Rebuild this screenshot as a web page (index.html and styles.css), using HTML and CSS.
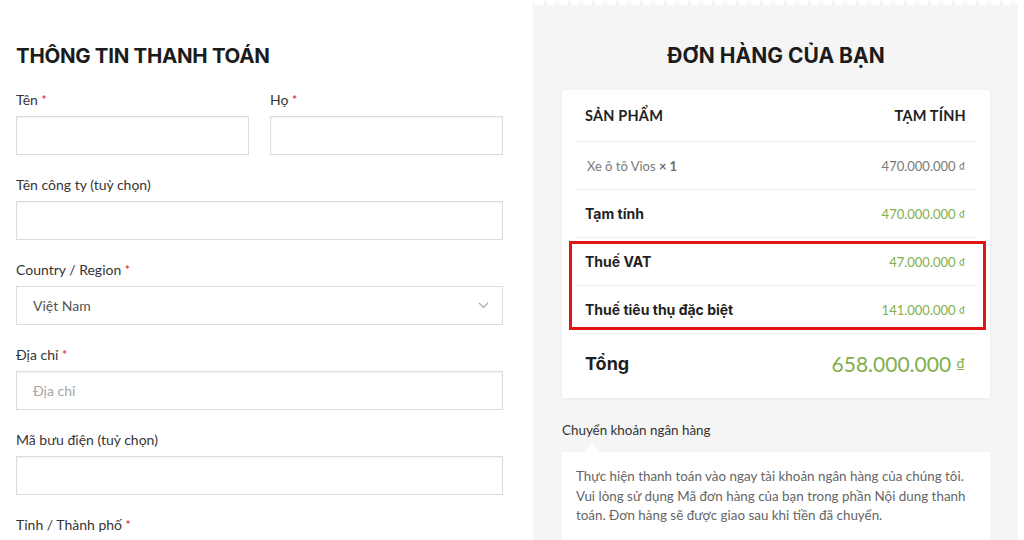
FILE: index.html
```html
<!DOCTYPE html>
<html lang="vi">
<head>
<meta charset="utf-8">
<title>Thanh toán</title>
<link rel="stylesheet" href="styles.css">
</head>
<body>
<div class="page">
  <section class="billing">
    <h2 class="title">THÔNG TIN THANH TOÁN</h2>
    <div class="row-2">
      <div class="field">
        <label class="label">Tên <span class="req">*</span></label>
        <div class="input"></div>
      </div>
      <div class="field">
        <label class="label">Họ <span class="req">*</span></label>
        <div class="input"></div>
      </div>
    </div>
    <div class="field">
      <label class="label">Tên công ty (tuỳ chọn)</label>
      <div class="input"></div>
    </div>
    <div class="field">
      <label class="label">Country / Region <span class="req">*</span></label>
      <div class="input select">
        <span class="value">Việt Nam</span>
        <svg class="chev" width="11" height="7" viewBox="0 0 11 7"><path d="M1 1l4.5 4.5L10 1" fill="none" stroke="#a9a9a9" stroke-width="1.2"/></svg>
      </div>
    </div>
    <div class="field">
      <label class="label">Địa chỉ <span class="req">*</span></label>
      <div class="input"><span class="ph">Địa chỉ</span></div>
    </div>
    <div class="field">
      <label class="label">Mã bưu điện (tuỳ chọn)</label>
      <div class="input"></div>
    </div>
    <div class="field">
      <label class="label">Tỉnh / Thành phố <span class="req">*</span></label>
    </div>
  </section>

  <aside class="order">
    <h2 class="title center">ĐƠN HÀNG CỦA BẠN</h2>
    <div class="card">
      <div class="trow head">
        <span>SẢN PHẨM</span><span>TẠM TÍNH</span>
      </div>
      <div class="trow item">
        <span>Xe ô tô Vios <b class="qty">× 1</b></span><span>470.000.000 <span class="cur">₫</span></span>
      </div>
      <div class="trow sum">
        <span class="lbl">Tạm tính</span><span class="amt">470.000.000 <span class="cur">₫</span></span>
      </div>
      <div class="trow sum">
        <span class="lbl">Thuế VAT</span><span class="amt">47.000.000 <span class="cur">₫</span></span>
      </div>
      <div class="trow sum">
        <span class="lbl">Thuế tiêu thụ đặc biệt</span><span class="amt">141.000.000 <span class="cur">₫</span></span>
      </div>
      <div class="trow total">
        <span class="lbl">Tổng</span><span class="amt">658.000.000 <span class="cur">₫</span></span>
      </div>
      <div class="highlight"></div>
    </div>
    <div class="pay-label">Chuyển khoản ngân hàng</div>
    <div class="pay-box">
      Thực hiện thanh toán vào ngay tài khoản ngân hàng của chúng tôi. Vui lòng sử dụng Mã đơn hàng của bạn trong phần Nội dung thanh toán. Đơn hàng sẽ được giao sau khi tiền đã chuyển.
    </div>
  </aside>
</div>
</body>
</html>
```

FILE: styles.css
```css
* { box-sizing: border-box; }
html, body { margin: 0; padding: 0; background: #fff; }
body {
  font-family: Lato, "Noto Sans", sans-serif;
  color: #333;
  width: 1024px;
  height: 540px;
  overflow: hidden;
}
.page {
  display: flex;
  align-items: flex-start;
}
.title {
  margin: 0;
  font-family: Inter, "Noto Sans", sans-serif;
  font-weight: 700;
  font-size: 21px;
  line-height: 30px;
  color: #1c1c1c;
}
.title.center { text-align: center; }

.billing {
  width: 503px;
  padding: 41px 0 0 16px;
}
.billing .title { margin-bottom: 19px; font-size: 20.5px; letter-spacing: -0.3px; }
.row-2 {
  display: grid;
  grid-template-columns: 1fr 1fr;
  column-gap: 21px;
}
.field { margin-bottom: 20px; }
.label {
  display: block;
  font-size: 14px;
  line-height: 20px;
  color: #353535;
  margin-bottom: 6px;
}
.req { color: #e0394a; font-weight: 700; font-size: 12px; vertical-align: 1px; }
.input {
  height: 39px;
  border: 1px solid #dcdcdc;
  box-shadow: inset 0 1px 2px rgba(0,0,0,0.06);
  background: #fff;
  display: flex;
  align-items: center;
  padding: 0 16px;
  font-size: 14px;
}
.select { justify-content: space-between; box-shadow: none; }
.select .value { color: #555; }
.select .chev { margin-right: -3px; }
.ph { color: #a6a6a6; }

.order {
  position: relative;
  margin-left: 30px;
  width: 485px;
  height: 540px;
  background: #f5f5f5;
  padding: 41px 28px 0 29px;
}
.order::before {
  content: "";
  position: absolute;
  left: 0; right: 0; top: 0;
  height: 10px;
  background: radial-gradient(circle at 50% 0, #fff 5px, rgba(255,255,255,0) 6px) repeat-x;
  background-size: 12px 10px;
}
.order .title { margin-bottom: 19px; }

.card {
  position: relative;
  background: #fff;
  padding: 0 13px 6px;
  box-shadow: 0 1px 3px rgba(0,0,0,0.06);
}
.trow {
  display: flex;
  justify-content: space-between;
  align-items: center;
  height: 48px;
  padding: 0 12px 0 10px;
  border-bottom: 1px solid #ececec;
  font-size: 13px;
}
.trow.head {
  height: 52px;
  font-weight: 700;
  font-size: 14.5px;
  color: #222;
  letter-spacing: 0.2px;
  padding-right: 11px;
}
.trow.item { color: #7a7a7a; padding-left: 12px; }
.qty { font-weight: 700; color: #6d6d6d; }
.cur { font-size: 10px; text-decoration: underline; vertical-align: 2px; }
.sum .lbl {
  font-family: Inter, "Noto Sans", sans-serif;
  font-weight: 700;
  font-size: 14px;
  color: #1f1f1f;
}
.amt { color: #80b04c; }
.trow.total {
  height: 58px;
  border-bottom: none;
}
.total .lbl {
  font-family: Inter, "Noto Sans", sans-serif;
  font-weight: 700;
  font-size: 18px;
  color: #1f1f1f;
}
.total .amt { font-size: 21px; }
.total .cur { font-size: 14px; vertical-align: 4px; }

.highlight {
  position: absolute;
  left: 7px;
  right: 4px;
  top: 151px;
  height: 89px;
  border: 3px solid #e01414;
  pointer-events: none;
}

.pay-label {
  margin-top: 22px;
  font-size: 13.4px;
  line-height: 20px;
  color: #333;
}
.pay-box {
  position: relative;
  margin-top: 12px;
  background: #fff;
  padding: 15px 14px 14px 14px;
  font-size: 13.4px;
  line-height: 19.5px;
  color: #666;
}
.pay-box::before {
  content: "";
  position: absolute;
  top: -8px;
  left: 22px;
  border: 8px solid transparent;
  border-top: 0;
  border-bottom-color: #fff;
}
```
